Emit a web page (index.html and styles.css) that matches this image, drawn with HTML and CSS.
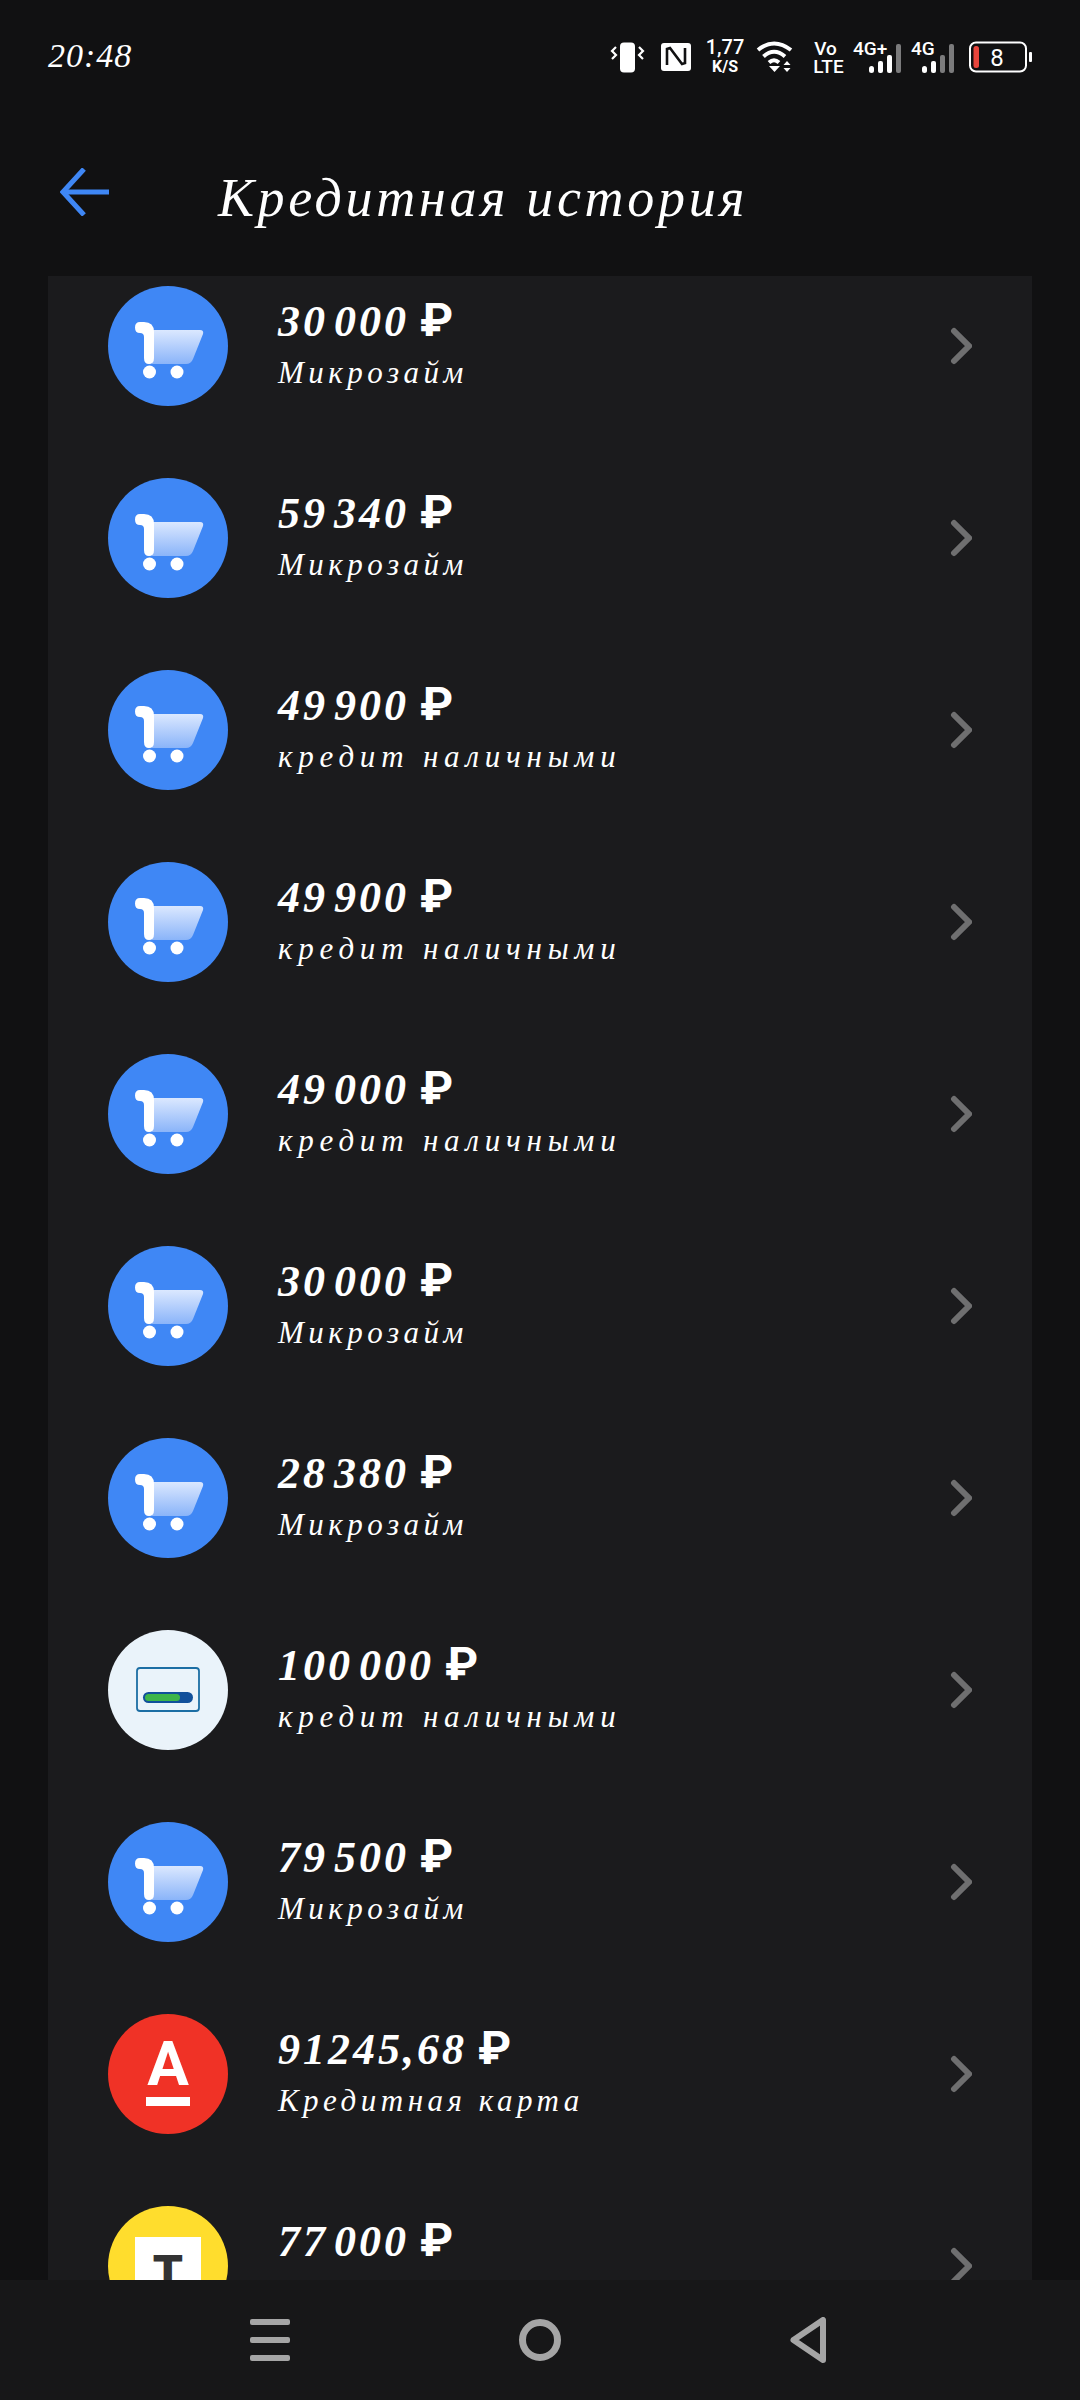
FILE: index.html
```html
<!DOCTYPE html>
<html lang="ru">
<head>
<meta charset="utf-8">
<title>Кредитная история</title>
<link rel="stylesheet" href="styles.css">
</head>
<body>
<svg class="sprite" aria-hidden="true">
  <defs>
    <linearGradient id="basket" x1="0" y1="0" x2="0" y2="1">
      <stop offset="0" stop-color="#dbe8ff"/>
      <stop offset="1" stop-color="#8ab4f9"/>
    </linearGradient>
    <symbol id="cart" viewBox="0 0 120 120">
      <circle cx="60" cy="60" r="60" fill="#3f87f5"/>
      <path d="M44 44H92Q96 44 95 48L85 73Q83 78 78 78H44Z" fill="url(#basket)"/>
      <path d="M32 36H36Q46 36 46 46V72Q46 78 41 78Q36 78 36 72V51Q36 47 32 47Q27 47 27 41.500Q27 36 32 36Z" fill="#fff"/>
      <circle cx="41.500" cy="86" r="6.500" fill="#fff"/>
      <circle cx="69" cy="86" r="6.500" fill="#fff"/>
    </symbol>
    <symbol id="chev" viewBox="0 0 26 40">
      <path d="M8 5L23 20L8 35" fill="none" stroke="#6f6f70" stroke-width="6" stroke-linecap="round" stroke-linejoin="miter"/>
    </symbol>
  </defs>
</svg>

<div class="phone">
  <div class="status">
    <span class="time">20:48</span>
    <svg class="status-icons" viewBox="610 36 422 44" width="422" height="44">
      <rect x="620" y="42.500" width="15" height="30" rx="4" fill="#fff"/>
      <path d="M616 48l-4 4 4 4-4 4M639 48l4 4-4 4 4 4" transform="translate(0 -1)" fill="none" stroke="#fff" stroke-width="2.200"/>
      <rect x="661" y="43" width="30" height="28" rx="3" fill="#fff"/>
      <path d="M667 65V49l3-1 12 16 3-1V48" fill="none" stroke="#111112" stroke-width="2.600"/>
      <text class="st st-b" x="725" y="53.500" text-anchor="middle">1,77</text>
      <text class="st st-s" x="725" y="72" text-anchor="middle">K/S</text>
      <path d="M758 50Q774 37 791 50M763.500 56.500Q774 47 785 56.500M769 62.500Q774 58 779 62.500" fill="none" stroke="#fff" stroke-width="4"/>
      <path d="M769 66h11l-5.500 6z" fill="#fff"/>
      <path d="M787 61l3.500 4h-7zM787 72l3.500-4h-7z" fill="#fff"/>
      <text class="st st-m" x="825.500" y="55" text-anchor="middle">Vo</text>
      <text class="st st-m" x="828.500" y="73" text-anchor="middle">LTE</text>
      <text class="st st-m" x="853" y="55">4G+</text>
      <g fill="#fff">
        <rect x="869" y="66" width="5" height="7" rx="2.500"/>
        <rect x="878" y="61" width="5" height="12" rx="2"/>
        <rect x="887" y="55" width="5" height="18" rx="2"/>
      </g>
      <rect x="896" y="44" width="5" height="29" rx="2" fill="#7b7b7c"/>
      <text class="st st-m" x="911" y="55">4G</text>
      <g fill="#fff">
        <rect x="922" y="66" width="5" height="7" rx="2.500"/>
        <rect x="931" y="61" width="5" height="12" rx="2"/>
      </g>
      <rect x="940" y="55" width="5" height="18" rx="2" fill="#7b7b7c"/>
      <rect x="949" y="44" width="5" height="29" rx="2" fill="#7b7b7c"/>
      <rect x="970" y="42.500" width="56" height="29" rx="6" fill="none" stroke="#fff" stroke-width="2"/>
      <rect x="973.500" y="46" width="5.500" height="22" rx="2.500" fill="#e8453c"/>
      <rect x="1029" y="52" width="3" height="10" rx="1" fill="#fff"/>
      <text class="st st-bat" x="997" y="66" text-anchor="middle">8</text>
    </svg>
  </div>

  <header class="header">
    <svg class="back" viewBox="0 0 49 48" width="49" height="48" aria-hidden="true">
      <path d="M24 1L3 24L24 47" fill="none" stroke="#3f87f5" stroke-width="5"/>
      <path d="M5 24H49" stroke="#3f87f5" stroke-width="5"/>
    </svg>
    <h1 class="title">Кредитная история</h1>
  </header>

  <main class="card">
    <ul class="list">
      <li class="row"><svg class="icon"><use href="#cart"/></svg><div class="info"><div class="amount">30 000 <span class="rub">₽</span></div><div class="kind">Микрозайм</div></div><svg class="chev"><use href="#chev"/></svg></li>
      <li class="row"><svg class="icon"><use href="#cart"/></svg><div class="info"><div class="amount">59 340 <span class="rub">₽</span></div><div class="kind">Микрозайм</div></div><svg class="chev"><use href="#chev"/></svg></li>
      <li class="row"><svg class="icon"><use href="#cart"/></svg><div class="info"><div class="amount">49 900 <span class="rub">₽</span></div><div class="kind wide">кредит наличными</div></div><svg class="chev"><use href="#chev"/></svg></li>
      <li class="row"><svg class="icon"><use href="#cart"/></svg><div class="info"><div class="amount">49 900 <span class="rub">₽</span></div><div class="kind wide">кредит наличными</div></div><svg class="chev"><use href="#chev"/></svg></li>
      <li class="row"><svg class="icon"><use href="#cart"/></svg><div class="info"><div class="amount">49 000 <span class="rub">₽</span></div><div class="kind wide">кредит наличными</div></div><svg class="chev"><use href="#chev"/></svg></li>
      <li class="row"><svg class="icon"><use href="#cart"/></svg><div class="info"><div class="amount">30 000 <span class="rub">₽</span></div><div class="kind">Микрозайм</div></div><svg class="chev"><use href="#chev"/></svg></li>
      <li class="row"><svg class="icon"><use href="#cart"/></svg><div class="info"><div class="amount">28 380 <span class="rub">₽</span></div><div class="kind">Микрозайм</div></div><svg class="chev"><use href="#chev"/></svg></li>
      <li class="row">
        <svg class="icon" viewBox="0 0 120 120">
          <circle cx="60" cy="60" r="60" fill="#eaf3fa"/>
          <rect x="29" y="38" width="62" height="43" rx="3" fill="none" stroke="#1c6ea4" stroke-width="1.800"/>
          <rect x="35" y="62" width="50" height="11" rx="5.500" fill="#11509b"/>
          <rect x="37" y="64" width="35" height="7" rx="3.500" fill="#3db54a"/>
        </svg>
        <div class="info"><div class="amount">100 000 <span class="rub">₽</span></div><div class="kind wide">кредит наличными</div></div><svg class="chev"><use href="#chev"/></svg></li>
      <li class="row"><svg class="icon"><use href="#cart"/></svg><div class="info"><div class="amount">79 500 <span class="rub">₽</span></div><div class="kind">Микрозайм</div></div><svg class="chev"><use href="#chev"/></svg></li>
      <li class="row">
        <svg class="icon" viewBox="0 0 120 120">
          <circle cx="60" cy="60" r="60" fill="#f03226"/>
          <text class="logo-a" x="60" y="71" text-anchor="middle">А</text>
          <rect x="38" y="83" width="44" height="9" fill="#fff"/>
        </svg>
        <div class="info"><div class="amount">91245,68 <span class="rub">₽</span></div><div class="kind">Кредитная карта</div></div><svg class="chev"><use href="#chev"/></svg></li>
      <li class="row">
        <svg class="icon" viewBox="0 0 120 120">
          <circle cx="60" cy="60" r="60" fill="#ffdd2d"/>
          <path d="M27 31H93V80Q93 90 84 94L60 108L36 94Q27 90 27 80Z" fill="#fff"/>
          <text class="logo-t" x="60" y="83" text-anchor="middle">Т</text>
        </svg>
        <div class="info"><div class="amount">77 000 <span class="rub">₽</span></div><div class="kind wide">кредит наличными</div></div><svg class="chev"><use href="#chev"/></svg></li>
    </ul>
  </main>

  <nav class="nav">
    <div class="burger"><span></span><span></span><span></span></div>
    <div class="home"></div>
    <svg class="tri" viewBox="0 0 36 46" width="36" height="46" aria-hidden="true">
      <path d="M3.500 23L33 3V43Z" fill="none" stroke="#a5a5a5" stroke-width="6" stroke-linejoin="round"/>
    </svg>
  </nav>
</div>
</body>
</html>
```

FILE: styles.css
```css
* { box-sizing: border-box; }
html, body { margin: 0; padding: 0; background: #111112; }
.sprite { position: absolute; width: 0; height: 0; }
.phone {
  width: 1080px;
  height: 2400px;
  display: flex;
  flex-direction: column;
  overflow: hidden;
  background: #111112;
  color: #fff;
  font-family: "Liberation Serif", serif;
  font-style: italic;
}
.status {
  height: 76px;
  flex: none;
  display: flex;
  align-items: flex-start;
  justify-content: space-between;
  padding: 36px 48px 0;
}
.time { font-size: 34px; line-height: 40px; letter-spacing: 1px; }
.status-icons { display: block; }
.st { fill: #fff; font-family: Roboto, sans-serif; font-style: normal; font-weight: 500; }
.st-b { font-size: 20px; }
.st-s { font-size: 16px; font-weight: 700; }
.st-m { font-size: 19px; }
.st-bat { font-size: 24px; font-weight: 400; }
.header {
  height: 200px;
  flex: none;
  display: flex;
  align-items: flex-start;
  padding: 92px 0 0 60px;
}
.back { flex: none; }
.title {
  margin: -2px 0 0 109px;
  font-size: 54px;
  line-height: 64px;
  font-weight: 400;
  letter-spacing: 3.7px;
  white-space: nowrap;
}
.card {
  flex: 1;
  min-height: 0;
  margin: 0 48px;
  background: #1b1b1d;
  overflow: hidden;
}
.list { list-style: none; margin: -26px 0 0; padding: 0; }
.row {
  height: 192px;
  display: flex;
  align-items: center;
  padding: 0 60px;
}
.icon { width: 120px; height: 120px; flex: none; display: block; }
.info { margin-left: 50px; flex: 1; min-width: 0; padding-bottom: 7px; }
.amount {
  font-size: 44px;
  line-height: 52px;
  font-weight: 700;
  letter-spacing: 3px;
  word-spacing: -8px;
  white-space: nowrap;
}
.rub {
  margin-left: 5px;
  font-family: Roboto, sans-serif;
  font-style: normal;
  font-size: 47px;
  font-weight: 700;
  letter-spacing: 0;
}
.kind {
  margin-top: 7px;
  font-size: 31px;
  line-height: 36px;
  letter-spacing: 4.5px;
  white-space: nowrap;
}
.wide { letter-spacing: 5.8px; }
.chev { width: 26px; height: 40px; flex: none; }
.logo-a { fill: #fff; font-family: Roboto, sans-serif; font-style: normal; font-weight: 700; font-size: 62px; }
.logo-t { fill: #333; font-family: Roboto, sans-serif; font-style: normal; font-weight: 900; font-size: 48px; }
.nav {
  height: 120px;
  flex: none;
  background: #171718;
  display: flex;
  align-items: center;
  justify-content: space-between;
  padding: 0 254px 0 250px;
}
.burger { width: 40px; display: flex; flex-direction: column; gap: 12px; }
.burger span { display: block; height: 6px; border-radius: 2px; background: #a5a5a5; }
.home { width: 42px; height: 42px; border-radius: 50%; border: 7px solid #a5a5a5; }
.tri { display: block; }
```
